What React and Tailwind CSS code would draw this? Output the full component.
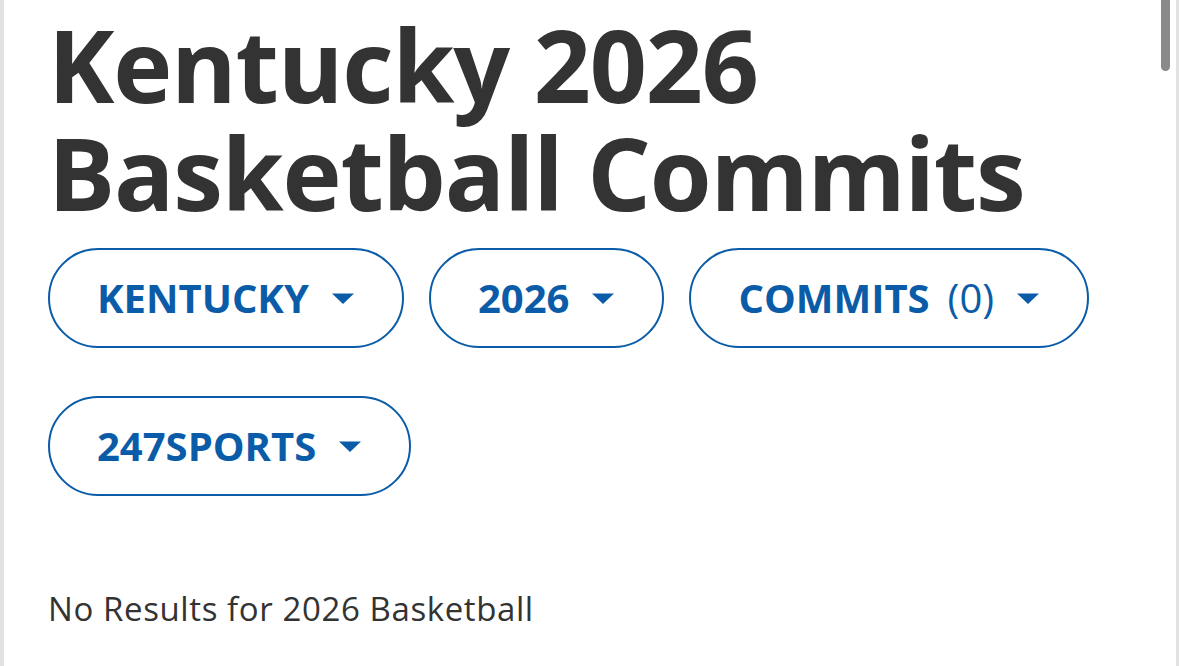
import React from "react";

function Caret() {
  return (
    <svg width="24" height="13" viewBox="0 0 24 13" className="shrink-0">
      <path d="M1 1.5 H23 L12 12 Z" fill="#0b5ca8" />
    </svg>
  );
}

function Pill({ label, count }) {
  return (
    <button className="flex items-center h-[100px] px-[47px] rounded-full border-[2.5px] border-[#0b5ca8] bg-white text-[#0b5ca8]">
      <span className="text-[40px] font-bold leading-none">{label}</span>
      {count && <span className="ml-[18px] text-[40px] font-normal leading-none">{count}</span>}
      <span className="ml-[22px]">
        <Caret />
      </span>
    </button>
  );
}

export default function App() {
  return (
    <div
      className="relative h-[666px] w-[1179px] overflow-hidden bg-white"
      style={{ fontFamily: "'Open Sans', Lato, sans-serif" }}
    >
      {/* left page edge */}
      <div className="absolute left-0 top-0 h-full w-[4px] bg-[#e2e2e2]" />
      {/* right edge + scrollbar */}
      <div className="absolute right-0 top-0 h-full w-[3px] bg-[#e2e2e2]" />
      <div className="absolute right-[9px] top-0 h-[71px] w-[9px] rounded-b-full bg-[#8a8a8a]" />

      <div className="pl-[48px] pt-[10px]">
        <h1 className="text-[100px] font-bold leading-[108px] text-[#333333] tracking-[-1.2px]">
          Kentucky 2026
          <br />
          Basketball Commits
        </h1>

        <div className="mt-[22px] flex flex-wrap gap-x-[25px] gap-y-[48px] pr-[60px]">
          <Pill label="KENTUCKY" />
          <Pill label="2026" />
          <Pill label="COMMITS" count="(0)" />
          <Pill label="247SPORTS" />
        </div>

        <p className="mt-[91px] text-[33px] leading-[44px] text-[#333333] tracking-[0.6px]">
          No Results for 2026 Basketball
        </p>
      </div>
    </div>
  );
}
